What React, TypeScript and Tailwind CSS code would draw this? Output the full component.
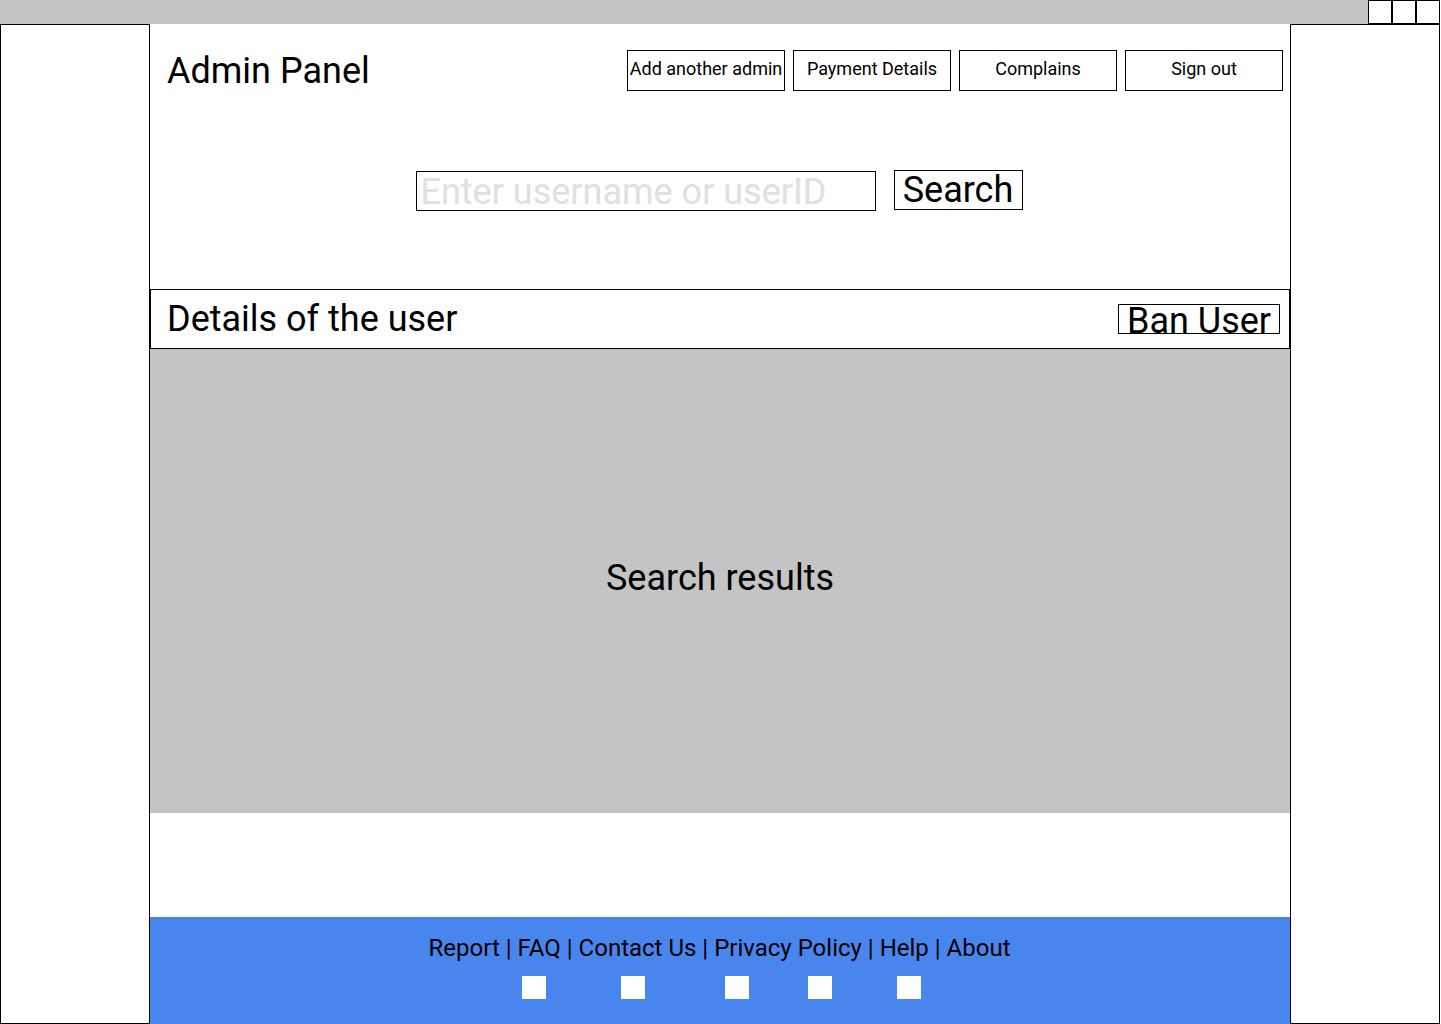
const nav = ['Add another admin', 'Payment Details', 'Complains', 'Sign out'];
const links = ['Report', 'FAQ', 'Contact Us', 'Privacy Policy', 'Help', 'About'];

export default function App() {
  return (
    <div className="flex min-h-screen flex-col bg-white pr-px font-['Roboto',sans-serif] text-black">
      <header className="flex h-6 justify-end bg-[#c4c4c4]">
        <button aria-label="Minimize" className="size-6 border border-black bg-white" />
        <button aria-label="Maximize" className="size-6 border border-black bg-white" />
        <button aria-label="Close" className="size-6 border border-black bg-white" />
      </header>
      <div className="flex grow">
        <aside className="w-[150px] shrink-0 border border-black" />
        <main className="flex min-w-0 grow flex-col">
          <div className="flex items-start justify-between pt-[26px] pr-[7px] pl-[17px]">
            <h1 className="text-4xl leading-[42px]">Admin Panel</h1>
            <nav className="flex gap-2">
              {nav.map((n) => (
                <button key={n} className="h-[41px] w-[158px] border border-black pb-1 text-lg leading-5 whitespace-nowrap">
                  {n}
                </button>
              ))}
            </nav>
          </div>
          <form className="flex justify-center gap-[18px] pt-[78px] pr-0.5" onSubmit={(e) => e.preventDefault()}>
            <input
              aria-label="Username or user ID"
              placeholder="Enter username or userID"
              className="mt-px h-10 w-[460px] border border-black px-1 pt-0.5 text-4xl placeholder:text-[#e0e0e0]"
            />
            <button className="h-10 w-[129px] border border-black text-4xl leading-9">Search</button>
          </form>
          <div className="mt-[78px] flex h-[60px] items-center justify-between border border-black pr-[9px] pl-4">
            <h2 className="text-4xl leading-[42px]">Details of the user</h2>
            <button className="h-[30px] w-[162px] border border-black pt-0.5 text-4xl leading-7">Ban User</button>
          </div>
          <section className="flex h-[464px] items-center justify-center bg-[#c4c4c4] pb-1.5 text-4xl">
            Search results
          </section>
          <footer className="mt-auto flex h-[107px] flex-col items-center bg-[#4886ed] pt-[17px] pr-px">
            <div className="text-2xl leading-7 whitespace-pre">
              {links.map((l, i) => (
                <span key={l}>
                  {i > 0 && ' | '}
                  <a href="#">{l}</a>
                </span>
              ))}
            </div>
            <div className="mt-[14px] flex pl-[3px]">
              <a href="#" aria-label="Social link 1" className="mr-[75px] h-[23px] w-6 bg-white" />
              <a href="#" aria-label="Social link 2" className="mr-20 h-[23px] w-6 bg-white" />
              <a href="#" aria-label="Social link 3" className="mr-[59px] h-[23px] w-6 bg-white" />
              <a href="#" aria-label="Social link 4" className="mr-[65px] h-[23px] w-6 bg-white" />
              <a href="#" aria-label="Social link 5" className="h-[23px] w-6 bg-white" />
            </div>
          </footer>
        </main>
        <aside className="w-[150px] shrink-0 border border-black" />
      </div>
    </div>
  );
}
